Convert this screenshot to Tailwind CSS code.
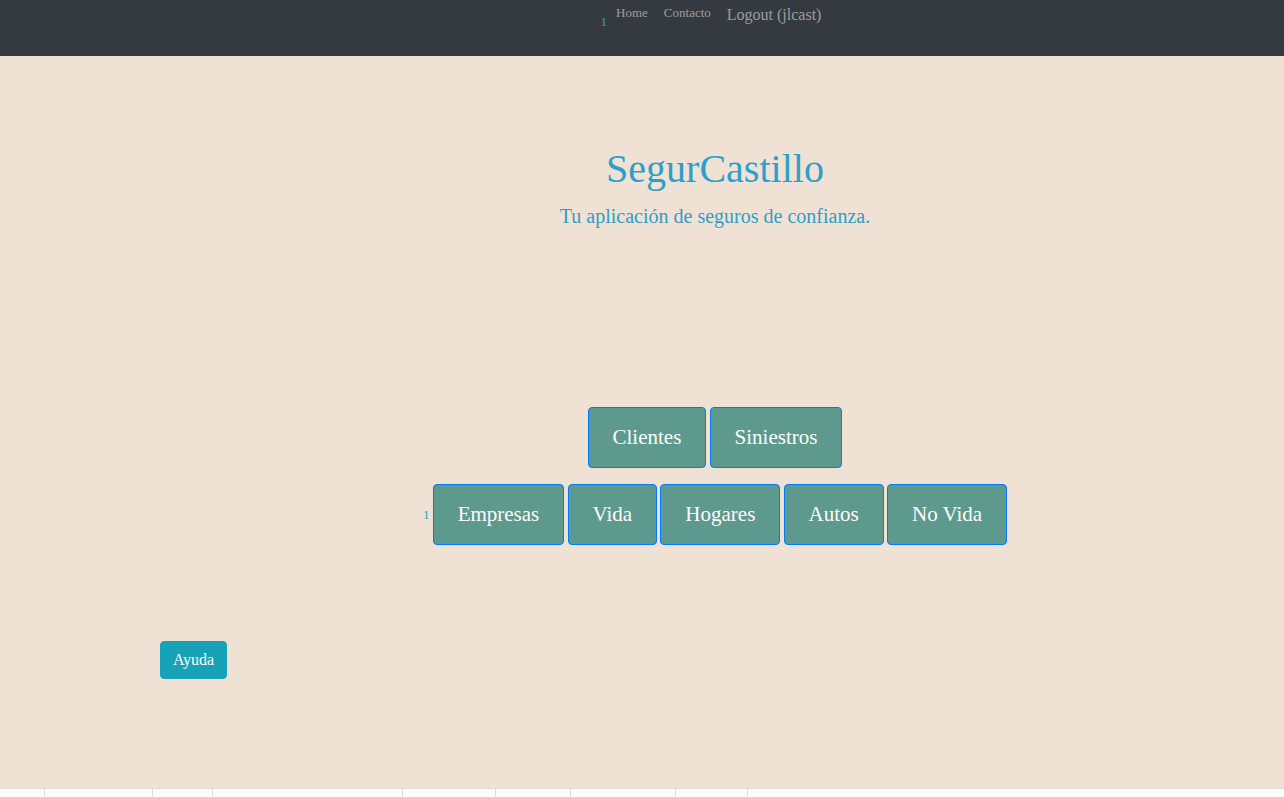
<!DOCTYPE html>
<html lang="es">
<head>
<meta charset="utf-8">
<meta name="viewport" content="width=device-width, initial-scale=1">
<title>SegurCastillo</title>
<script src="https://cdn.jsdelivr.net/npm/@tailwindcss/browser@4"></script>
</head>
<body class="flex h-screen flex-col overflow-hidden bg-[#efe1d4] font-['Liberation_Serif',serif] text-[13px] text-[#2d9fcb]">
  <header class="h-14 shrink-0 bg-[#343a40] pl-[146px]">
    <nav class="flex justify-center" aria-label="Principal">
      <span class="pt-3 pr-px leading-5">1</span>
      <ul class="flex items-start text-white/50">
        <li><a href="#" class="block px-2 pt-[3px] leading-5">Home</a></li>
        <li><a href="#" class="block px-2 pt-[3px] leading-5">Contacto</a></li>
        <li><button type="button" class="block px-2 pt-[3px] text-base">Logout (jlcast)</button></li>
      </ul>
    </nav>
  </header>

  <main class="flex-1 pl-[146px]">
    <section class="pt-[89px] text-center">
      <h1 class="text-[40px] leading-12">SegurCastillo</h1>
      <p class="mt-[7px] text-xl leading-8">Tu aplicación de seguros de confianza.</p>
    </section>

    <section class="mt-[175px] text-center leading-5">
      <div>
        <a href="#" class="inline-block rounded border border-[#007bff] bg-[#5d9a8d] px-6 py-[14px] align-middle text-[21px] leading-[31px] text-white">Clientes</a>
        <a href="#" class="inline-block rounded border border-[#007bff] bg-[#5d9a8d] px-6 py-[14px] align-middle text-[21px] leading-[31px] text-white">Siniestros</a>
      </div>
      <div class="mt-4">
        <span class="align-middle">1</span>
        <a href="#" class="inline-block rounded border border-[#007bff] bg-[#5d9a8d] px-6 py-[14px] align-middle text-[21px] leading-[31px] text-white">Empresas</a>
        <a href="#" class="inline-block rounded border border-[#007bff] bg-[#5d9a8d] px-6 py-[14px] align-middle text-[21px] leading-[31px] text-white">Vida</a>
        <a href="#" class="inline-block rounded border border-[#007bff] bg-[#5d9a8d] px-6 py-[14px] align-middle text-[21px] leading-[31px] text-white">Hogares</a>
        <a href="#" class="inline-block rounded border border-[#007bff] bg-[#5d9a8d] px-6 py-[14px] align-middle text-[21px] leading-[31px] text-white">Autos</a>
        <a href="#" class="inline-block rounded border border-[#007bff] bg-[#5d9a8d] px-6 py-[14px] align-middle text-[21px] leading-[31px] text-white">No Vida</a>
      </div>
    </section>

    <button type="button" class="mt-24 ml-[14px] rounded border border-[#17a2b8] bg-[#17a2b8] px-3 py-1.5 text-base text-white">Ayuda</button>
  </main>

  <footer class="flex h-[9px] shrink-0 border-t border-[#dddddd] bg-[#fdfdfd]">
    <div class="w-[45px] border-r border-[#dddddd]"></div>
    <div class="w-[108px] border-r border-[#dddddd]"></div>
    <div class="w-[60px] border-r border-[#dddddd]"></div>
    <div class="w-[190px] border-r border-[#dddddd]"></div>
    <div class="w-[93px] border-r border-[#dddddd]"></div>
    <div class="w-[75px] border-r border-[#dddddd]"></div>
    <div class="w-[105px] border-r border-[#dddddd]"></div>
    <div class="w-[72px] border-r border-[#dddddd]"></div>
  </footer>
</body>
</html>
